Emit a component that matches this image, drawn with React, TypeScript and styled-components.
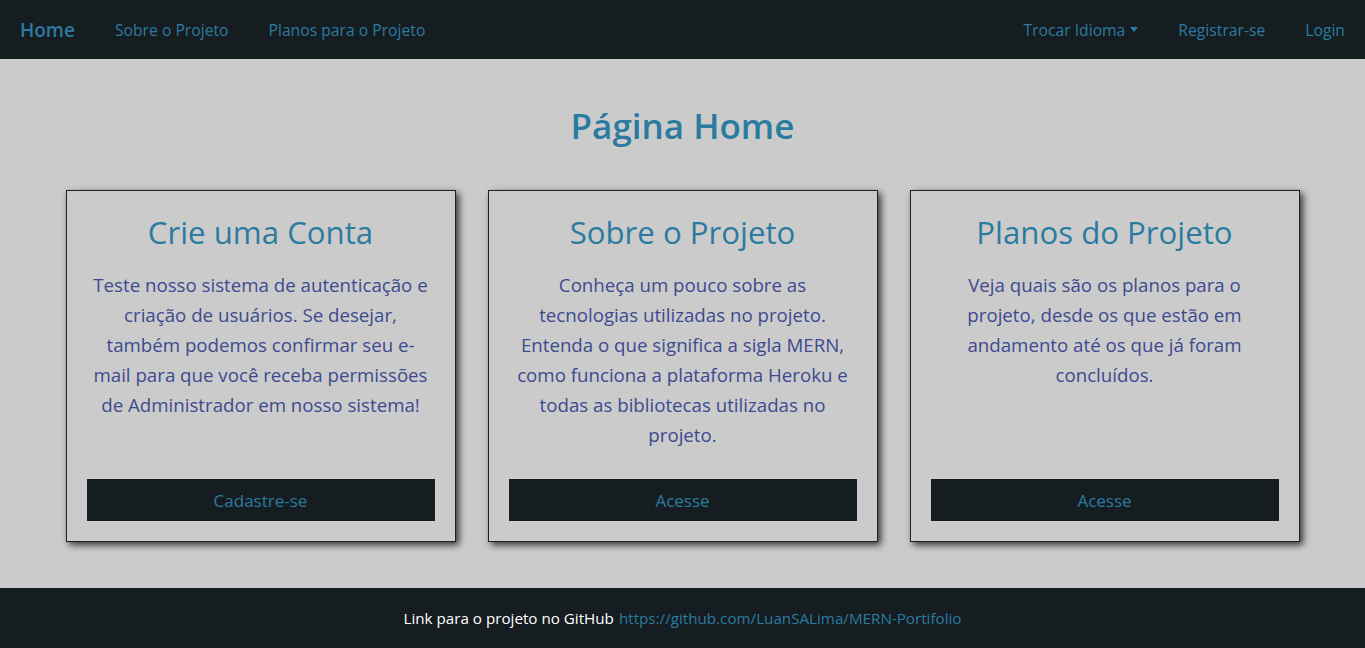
import React from "react";
import styled, { createGlobalStyle } from "styled-components";

const FONT = `"Open Sans", "Noto Sans", "Liberation Sans", sans-serif`;

const Global = createGlobalStyle`
  html, body { margin: 0; padding: 0; }
  body { font-family: ${FONT}; background: #cbcbcb; }
  * { box-sizing: border-box; }
  a { text-decoration: none; }
`;

const Page = styled.div`
  display: flex;
  flex-direction: column;
  min-height: 648px;
`;

const NavBar = styled.nav`
  height: 59px;
  background: #161d21;
  display: flex;
  align-items: center;
  justify-content: space-between;
  padding: 0 0 0 20px;
`;

const NavGroup = styled.div`
  display: flex;
  align-items: center;
`;

const Brand = styled.a`
  color: #2b7ba0;
  font-size: 19px;
  font-weight: 600;
  margin-right: 20px;
`;

const NavLink = styled.a`
  color: #2b7ba0;
  font-size: 15.7px;
  padding: 0 20px;
  display: flex;
  align-items: center;
  gap: 4px;
`;

const Caret = styled.span`
  display: inline-block;
  width: 0;
  height: 0;
  border-left: 4px solid transparent;
  border-right: 4px solid transparent;
  border-top: 5px solid #2b7ba0;
  margin-left: 1px;
`;

const Main = styled.main`
  flex: 1;
  display: flex;
  flex-direction: column;
  align-items: center;
  padding: 45px 0 45px;
`;

const Title = styled.h1`
  margin: 0 0 43px;
  font-size: 35px;
  line-height: 43px;
  font-weight: 600;
  color: #2b7ba0;
`;

const Cards = styled.div`
  display: grid;
  grid-template-columns: repeat(3, 390px);
  gap: 32px;
`;

const Card = styled.section`
  display: flex;
  flex-direction: column;
  height: 352px;
  border: 1px solid #1b2226;
  box-shadow: 3px 3px 7px rgba(0, 0, 0, 0.75);
  padding: 22px 20px 20px;
  text-align: center;
`;

const CardTitle = styled.h2`
  margin: 0 0 19px;
  font-size: 31.2px;
  line-height: 38px;
  font-weight: 400;
  color: #2b7ba0;
`;

const CardText = styled.p`
  margin: 0 auto;
  max-width: 342px;
  font-size: 18.7px;
  line-height: 30px;
  color: #3e4a90;
`;

const CardButton = styled.a`
  margin-top: auto;
  height: 42px;
  background: #161d21;
  color: #2b7ba0;
  font-size: 17px;
  display: flex;
  align-items: center;
  justify-content: center;
`;

const Footer = styled.footer`
  height: 60px;
  background: #161d21;
  display: flex;
  align-items: center;
  justify-content: center;
  font-size: 15.2px;
  color: #ffffff;
  gap: 5px;
`;

const FooterLink = styled.a`
  color: #2b7ba0;
`;

const cards = [
  {
    title: "Crie uma Conta",
    text: "Teste nosso sistema de autenticação e criação de usuários. Se desejar, também podemos confirmar seu e-mail para que você receba permissões de Administrador em nosso sistema!",
    button: "Cadastre-se",
  },
  {
    title: "Sobre o Projeto",
    text: "Conheça um pouco sobre as tecnologias utilizadas no projeto. Entenda o que significa a sigla MERN, como funciona a plataforma Heroku e todas as bibliotecas utilizadas no projeto.",
    button: "Acesse",
  },
  {
    title: "Planos do Projeto",
    text: "Veja quais são os planos para o projeto, desde os que estão em andamento até os que já foram concluídos.",
    button: "Acesse",
  },
];

export default function App() {
  return (
    <Page>
      <Global />
      <NavBar>
        <NavGroup>
          <Brand href="#">Home</Brand>
          <NavLink href="#">Sobre o Projeto</NavLink>
          <NavLink href="#">Planos para o Projeto</NavLink>
        </NavGroup>
        <NavGroup>
          <NavLink href="#">
            Trocar Idioma <Caret />
          </NavLink>
          <NavLink href="#">Registrar-se</NavLink>
          <NavLink href="#">Login</NavLink>
        </NavGroup>
      </NavBar>
      <Main>
        <Title>Página Home</Title>
        <Cards>
          {cards.map((c) => (
            <Card key={c.title}>
              <CardTitle>{c.title}</CardTitle>
              <CardText>{c.text}</CardText>
              <CardButton href="#">{c.button}</CardButton>
            </Card>
          ))}
        </Cards>
      </Main>
      <Footer>
        Link para o projeto no GitHub
        <FooterLink href="#">https://github.com/LuanSALima/MERN-Portifolio</FooterLink>
      </Footer>
    </Page>
  );
}
